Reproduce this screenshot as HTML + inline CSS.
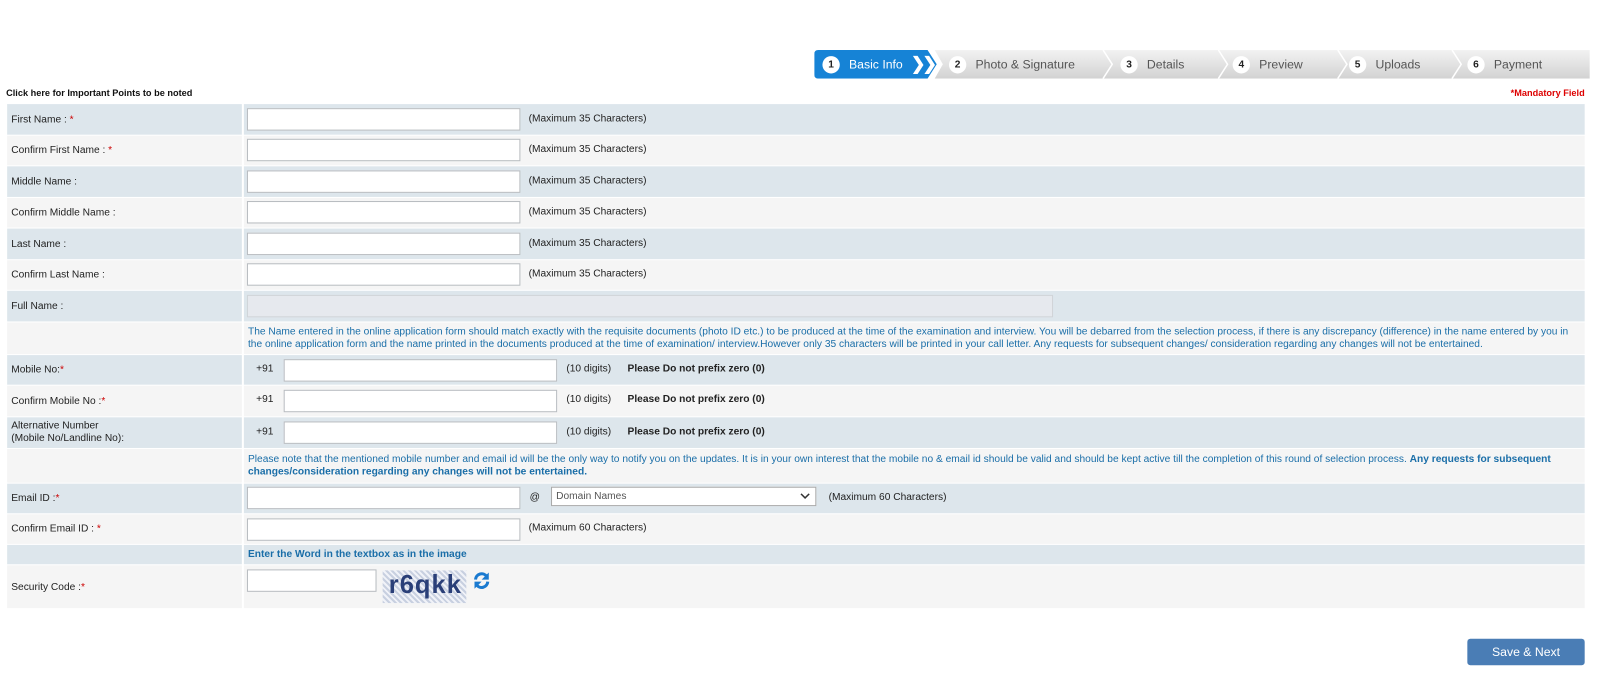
<!DOCTYPE html>
<html><head><meta charset="utf-8"><style>
*{margin:0;padding:0;box-sizing:border-box}
body{width:1600px;height:699px;background:#fff;font-family:"Liberation Sans",Arial,sans-serif;font-size:10px;color:#222;position:relative;overflow:hidden}
#w{position:absolute;left:0;top:0;width:1568px;height:685px;transform:scale(1.0204);transform-origin:0 0}
.a{position:absolute}
.row{position:absolute;left:7px;width:1546px}
.row .l{position:absolute;left:0;top:0;bottom:0;width:230px;padding-left:4px;display:flex;align-items:center}
.row .c{position:absolute;left:232px;right:0;top:0;bottom:0}
.b .l,.b .c{background:#dde6ec}
.w .l,.w .c{background:#f5f5f5}
.req{color:#c00}
.in{position:absolute;background:#fff;border:1px solid #b8bcc0;height:22px}
.t{position:absolute;white-space:nowrap}
.blue{color:#1a6ea8}
.step{position:absolute;top:49px;height:28px;display:flex;align-items:center;font-size:12px;color:#555}
.num{width:17px;height:17px;border-radius:50%;background:#fff;color:#222;font-size:10px;font-weight:bold;display:inline-flex;align-items:center;justify-content:center;margin-right:9px}
</style></head><body><div id="w">
<svg class="a" style="left:798px;top:49px" width="760" height="28">
<defs><linearGradient id="g" x1="0" y1="0" x2="0" y2="1"><stop offset="0" stop-color="#f2f2f2"/><stop offset="1" stop-color="#d2d2d2"/></linearGradient></defs>
<path d="M118 0H760V28H118L126 14Z" fill="url(#g)"/>
<path d="M283 0L292 14L283 28M396 0L405 14L396 28M513 0L522 14L513 28M625 0L634 14L625 28" stroke="#fff" stroke-width="1.5" fill="none"/>
<path d="M4 0H111L120 14L111 28H4Q0 28 0 24V4Q0 0 4 0Z" fill="#1683d6"/>
</svg>
<div class="step" style="left:806px;color:#fff"><span class="num">1</span>Basic Info<span style="font-weight:bold;font-size:17px;margin-left:8px;letter-spacing:-3px">❯❯</span></div>
<div class="step" style="left:930px"><span class="num">2</span>Photo &amp; Signature</div>
<div class="step" style="left:1098px"><span class="num">3</span>Details</div>
<div class="step" style="left:1208px"><span class="num">4</span>Preview</div>
<div class="step" style="left:1322px"><span class="num">5</span>Uploads</div>
<div class="step" style="left:1438px"><span class="num">6</span>Payment</div>

<div class="t" style="left:6px;top:86px;font-weight:bold;font-size:9px;color:#111">Click here for Important Points to be noted</div>
<div class="t" style="right:15px;top:86px;font-weight:bold;font-size:9px;color:#d00">*Mandatory Field</div>

<div class="row b" style="top:102px;height:30px"><div class="l">First Name : <span class="req">&nbsp;*</span></div><div class="c"><div class="in" style="left:3px;top:4px;width:268px"></div><div class="t" style="left:279px;top:9px">(Maximum 35 Characters)</div></div></div>
<div class="row w" style="top:133px;height:29px"><div class="l">Confirm First Name : <span class="req">&nbsp;*</span></div><div class="c"><div class="in" style="left:3px;top:3px;width:268px"></div><div class="t" style="left:279px;top:8px">(Maximum 35 Characters)</div></div></div>
<div class="row b" style="top:163px;height:30px"><div class="l">Middle Name :</div><div class="c"><div class="in" style="left:3px;top:4px;width:268px"></div><div class="t" style="left:279px;top:9px">(Maximum 35 Characters)</div></div></div>
<div class="row w" style="top:194px;height:29px"><div class="l">Confirm Middle Name :</div><div class="c"><div class="in" style="left:3px;top:3px;width:268px"></div><div class="t" style="left:279px;top:8px">(Maximum 35 Characters)</div></div></div>
<div class="row b" style="top:224px;height:30px"><div class="l">Last Name :</div><div class="c"><div class="in" style="left:3px;top:4px;width:268px"></div><div class="t" style="left:279px;top:9px">(Maximum 35 Characters)</div></div></div>
<div class="row w" style="top:255px;height:29px"><div class="l">Confirm Last Name :</div><div class="c"><div class="in" style="left:3px;top:3px;width:268px"></div><div class="t" style="left:279px;top:8px">(Maximum 35 Characters)</div></div></div>
<div class="row b" style="top:285px;height:30px"><div class="l">Full Name :</div><div class="c"><div class="in" style="left:3px;top:4px;width:790px;background:#e6e9ee;border-color:#d0d4d8"></div></div></div>
<div class="row w" style="top:316px;height:31px"><div class="l"></div><div class="c"><div class="blue" style="position:absolute;left:4px;top:4px;right:6px;line-height:12px">The Name entered in the online application form should match exactly with the requisite documents (photo ID etc.) to be produced at the time of the examination and interview. You will be debarred from the selection process, if there is any discrepancy (difference) in the name entered by you in the online application form and the name printed in the documents produced at the time of examination/ interview.However only 35 characters will be printed in your call letter. Any requests for subsequent changes/ consideration regarding any changes will not be entertained.</div></div></div>
<div class="row b" style="top:348px;height:29px"><div class="l">Mobile No:<span class="req">*</span></div><div class="c"><div class="t" style="left:12px;top:8px">+91</div><div class="in" style="left:39px;top:4px;width:268px"></div><div class="t" style="left:316px;top:8px">(10 digits)</div><div class="t" style="left:376px;top:8px;font-weight:bold">Please Do not prefix zero (0)</div></div></div>
<div class="row w" style="top:378px;height:30px"><div class="l">Confirm Mobile No :<span class="req">*</span></div><div class="c"><div class="t" style="left:12px;top:8px">+91</div><div class="in" style="left:39px;top:4px;width:268px"></div><div class="t" style="left:316px;top:8px">(10 digits)</div><div class="t" style="left:376px;top:8px;font-weight:bold">Please Do not prefix zero (0)</div></div></div>
<div class="row b" style="top:409px;height:30px"><div class="l" style="line-height:12px">Alternative Number<br>(Mobile No/Landline No):</div><div class="c"><div class="t" style="left:12px;top:9px">+91</div><div class="in" style="left:39px;top:4px;width:268px"></div><div class="t" style="left:316px;top:9px">(10 digits)</div><div class="t" style="left:376px;top:9px;font-weight:bold">Please Do not prefix zero (0)</div></div></div>
<div class="row w" style="top:440px;height:33px"><div class="l"></div><div class="c"><div class="blue" style="position:absolute;left:4px;top:5px;right:20px;line-height:12px">Please note that the mentioned mobile number and email id will be the only way to notify you on the updates. It is in your own interest that the mobile no &amp; email id should be valid and should be kept active till the completion of this round of selection process. <b>Any requests for subsequent changes/consideration regarding any changes will not be entertained.</b></div></div></div>
<div class="row b" style="top:474px;height:29px"><div class="l">Email ID :<span class="req">*</span></div><div class="c"><div class="in" style="left:3px;top:3px;width:268px"></div><div class="t" style="left:280px;top:8px">@</div><div class="in" style="left:301px;top:3px;width:260px;height:19px;border-color:#aaa;color:#555;padding:3px 4px">Domain Names<svg style="position:absolute;right:5px;top:5px" width="10" height="7"><path d="M1 1L5 5L9 1" stroke="#333" stroke-width="1.5" fill="none"/></svg></div><div class="t" style="left:573px;top:8px">(Maximum 60 Characters)</div></div></div>
<div class="row w" style="top:504px;height:29px"><div class="l">Confirm Email ID : <span class="req">&nbsp;*</span></div><div class="c"><div class="in" style="left:3px;top:4px;width:268px"></div><div class="t" style="left:279px;top:8px">(Maximum 60 Characters)</div></div></div>
<div class="row b" style="top:534px;height:19px"><div class="l"></div><div class="c"><div class="t blue" style="left:4px;top:4px;font-weight:bold">Enter the Word in the textbox as in the image</div></div></div>
<div class="row w" style="top:554px;height:42px"><div class="l">Security Code :<span class="req">*</span></div><div class="c"><div class="in" style="left:3px;top:4px;width:127px"></div>
<div style="position:absolute;left:136px;top:5px;width:82px;height:32px;background:repeating-linear-gradient(45deg,#c8d0e0 0 2px,#f0f2f8 2px 4px);overflow:hidden"><div style="position:absolute;left:6px;top:0;font-size:25px;font-weight:bold;color:#2a3f78;letter-spacing:1px;font-family:'Liberation Sans',sans-serif">r6qkk</div></div>
<svg style="position:absolute;left:224px;top:6px" width="18" height="18" viewBox="0 0 18 18"><path d="M3 8A6 6 0 0 1 14 5" stroke="#1a7ad0" stroke-width="3" fill="none"/><path d="M16 1V8H9Z" fill="#1a7ad0"/><path d="M15 10A6 6 0 0 1 4 13" stroke="#1a7ad0" stroke-width="3" fill="none"/><path d="M2 17V10H9Z" fill="#1a7ad0"/></svg></div></div>

<div class="a" style="left:1438px;top:626px;width:115px;height:26px;background:#4a7db5;border-radius:3px;color:#fff;font-size:12px;display:flex;align-items:center;justify-content:center">Save &amp; Next</div>
</div></body></html>
